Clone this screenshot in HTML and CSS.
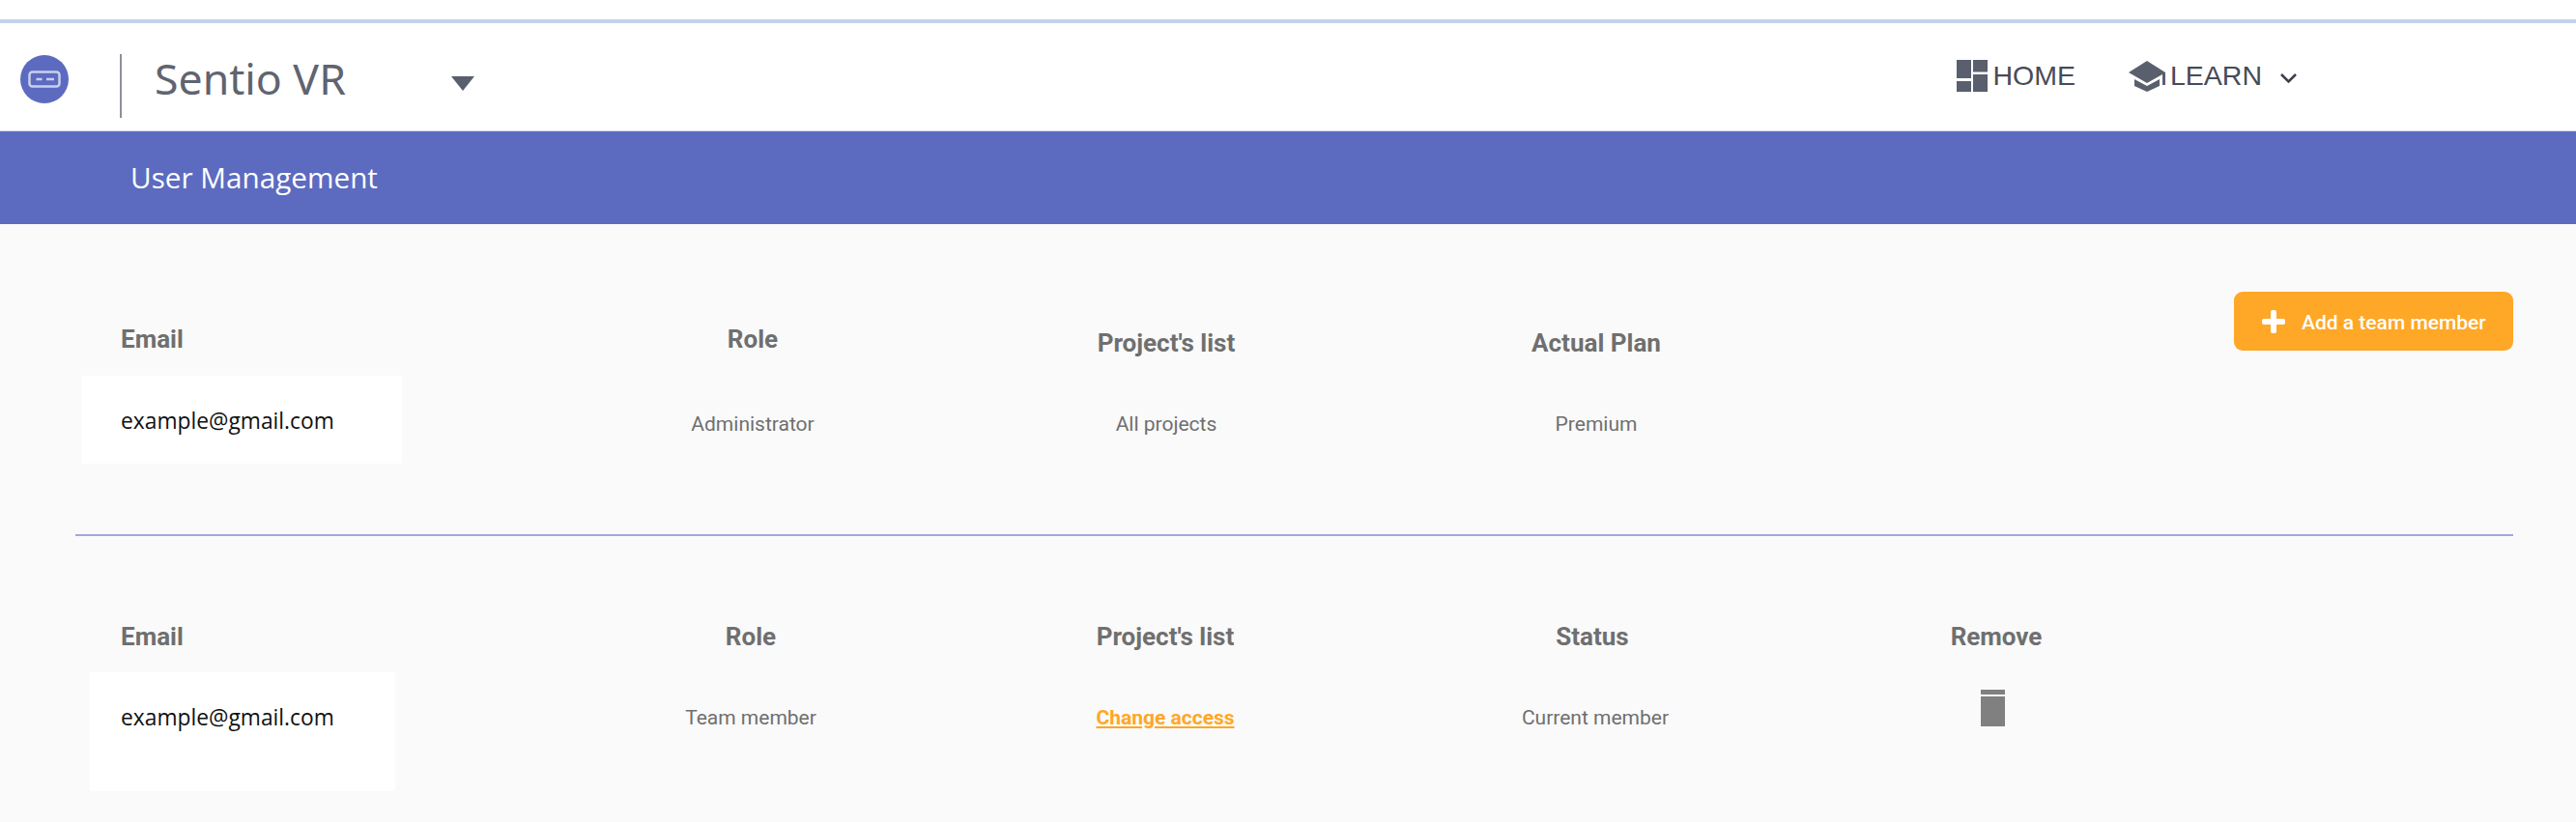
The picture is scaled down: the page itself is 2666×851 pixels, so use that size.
FILE: index.html
```html
<!DOCTYPE html>
<html lang="en">

<head>
    <meta charset="UTF-8" />
    <title>User Management</title>
    <link rel="stylesheet" href="styles.css">
</head>

<body>
    <!-- top bar -->
    <header class="topbar">
        <div class="brand">
            <span class="logo">
                <svg width="50" height="50" viewBox="0 0 50 50">
                    <circle cx="25" cy="25" r="25" fill="#5c6bc0" />
                    <rect x="9.500" y="17.500" width="31" height="15" rx="3" fill="none" stroke="#c9cfee" stroke-width="2.500" />
                    <path d="M16.500 25h6M27 25h8" stroke="#c9cfee" stroke-width="2.500" />
                </svg>
            </span>
            <span class="brand-name">Sentio VR</span>
            <svg class="caret" width="24" height="15" viewBox="0 0 24 15">
                <path d="M0 0h24L12 15z" fill="#5a5f6e" />
            </svg>
        </div>
        <nav class="menu">
            <a href="#" class="menu-item">
                <svg width="32" height="33" viewBox="0 0 32 33">
                    <path d="M0 0h15v19H0zM17 0h15v12.500H17zM0 22h15v11H0zM17 15h15v18H17z" fill="#5a5f6e" />
                </svg>
                HOME
            </a>
            <a href="#" class="menu-item">
                <svg width="38" height="32" viewBox="0 0 38 32">
                    <path d="M19 0L0 12l19 11 16-9v11h3V12zM6 19v7l13 6 13-6v-7l-13 7z" fill="#5a5f6e" />
                </svg>
                LEARN
                <svg class="chevron" width="17" height="10" viewBox="0 0 17 10">
                    <path d="M1 1l7.500 7.500L16 1" fill="none" stroke="#3c3f4a" stroke-width="2.500" />
                </svg>
            </a>
        </nav>
    </header>

    <div class="band">User Management</div>

    <!-- administrator -->
    <section class="admin">
        <div class="head head-email">Email</div>
        <div class="head">Role</div>
        <div class="head head-low">Project's list</div>
        <div class="head head-low">Actual Plan</div>
        <a href="#" class="add-btn">
            <svg width="24" height="24" viewBox="0 0 24 24">
                <path d="M9 2a2 2 0 0 1 2-2h2a2 2 0 0 1 2 2v7h7a2 2 0 0 1 2 2v2a2 2 0 0 1-2 2h-7v7a2 2 0 0 1-2 2h-2a2 2 0 0 1-2-2v-7H2a2 2 0 0 1-2-2v-2a2 2 0 0 1 2-2h7z" fill="#fff" />
            </svg>
            <span class="add-label">Add a team member</span>
        </a>
        <div class="email-box">example@gmail.com</div>
        <div class="val">Administrator</div>
        <div class="val">All projects</div>
        <div class="val">Premium</div>
    </section>

    <!-- team members -->
    <section class="members">
        <div class="head head-email">Email</div>
        <div class="head">Role</div>
        <div class="head">Project's list</div>
        <div class="head">Status</div>
        <div class="head">Remove</div>
        <div class="email-box">example@gmail.com</div>
        <div class="val">Team member</div>
        <div class="val"><a href="#" class="change-link">Change access</a></div>
        <div class="val val-status">Current member</div>
        <div class="val trash">
            <svg width="25" height="38" viewBox="0 0 25 38">
                <path d="M0 0h25v5H0zM0 7h25v31H0z" fill="#808080" />
            </svg>
        </div>
    </section>
</body>

</html>
```

FILE: styles.css
```css
* {
    margin: 0;
    padding: 0;
    box-sizing: border-box;
}

body {
    background-color: #fafafa;
    font-family: Roboto, "Liberation Sans", sans-serif;
    color: #6f6f6f;
}

a {
    color: inherit;
    text-decoration: none;
}

.topbar {
    display: flex;
    justify-content: space-between;
    align-items: center;
    height: 136px;
    padding: 20px 0 0 21px;
    background-color: #fff;
    position: relative;
    border-bottom: 1px solid #d5d9ef;
}

.topbar::before {
    content: "";
    position: absolute;
    top: 20px;
    left: 0;
    right: 0;
    height: 4px;
    background-color: #c3d2e8;
}

.brand {
    display: flex;
    align-items: center;
    margin-top: 23px;
}

.logo {
    display: flex;
    align-items: center;
    height: 66px;
    padding-right: 53px;
    border-right: 2px solid #8d9099;
}

.logo svg {
    margin-bottom: 14px;
}

.brand-name {
    width: 341px;
    padding-left: 34px;
    margin-bottom: 17px;
    font-family: "Noto Sans", sans-serif;
    font-size: 44.600px;
    color: #5f6470;
}

.caret {
    margin-bottom: 5px;
}

.menu {
    display: flex;
    align-items: center;
    gap: 55px;
    margin-top: 2px;
    margin-right: 289px;
}

.menu-item {
    display: flex;
    align-items: center;
    gap: 5px;
    font-family: "Liberation Sans", sans-serif;
    font-size: 28.500px;
    color: #474b58;
}

.menu-item .chevron {
    margin-left: 14px;
    margin-top: 4px;
}

.band {
    height: 96px;
    padding: 28px 0 0 135px;
    background-color: #5c6bc0;
    color: #fff;
    font-family: "Open Sans", sans-serif;
    font-size: 29.700px;
    line-height: 40px;
}

.admin,
.members {
    display: grid;
    font-size: 21px;
}

.admin {
    grid-template-columns: 406px 578px 278px 612px 1fr;
    grid-template-rows: 87px auto;
    width: 2523px;
    margin-left: 78px;
    padding: 70px 0 73px 6px;
    border-bottom: 2px solid #9fa8da;
}

.members {
    grid-template-columns: 398px 572px 286px 598px 238px;
    grid-template-rows: 51px auto;
    padding-top: 90px;
    margin-left: 93px;
}

.head {
    padding-top: 35px;
    font-size: 26px;
    font-weight: 700;
    line-height: 28px;
    text-align: center;
    color: #6f6f6f;
}

.members .head {
    padding-top: 0;
}

.head-low {
    padding-top: 39px;
}

.head-email {
    padding-left: 41px;
    text-align: left;
}

.members .head-email {
    padding-left: 32px;
}

.add-btn {
    display: flex;
    justify-self: end;
    align-items: center;
    gap: 17px;
    width: 289px;
    height: 61px;
    padding-left: 29px;
    border-radius: 9px;
    background-color: #ffa726;
    color: #fff;
    font-size: 21px;
    font-weight: 500;
}

.add-label {
    padding-top: 2px;
}

.email-box {
    width: 332px;
    height: 91px;
    padding: 31px 0 0 41px;
    background-color: #fff;
    color: #111;
    font-family: "Open Sans", sans-serif;
    font-size: 22.800px;
    line-height: 32px;
}

.members .email-box {
    width: 316px;
    height: 123px;
    padding-left: 32px;
}

.val {
    padding-top: 36px;
    line-height: 28px;
    text-align: center;
}

.members .val {
    padding-top: 33px;
}

.members .val-status {
    padding-left: 6px;
}

.members .trash {
    padding: 18px 8px 0 0;
}

.change-link {
    color: #ffa726;
    font-weight: 700;
    text-decoration: underline;
}
```
